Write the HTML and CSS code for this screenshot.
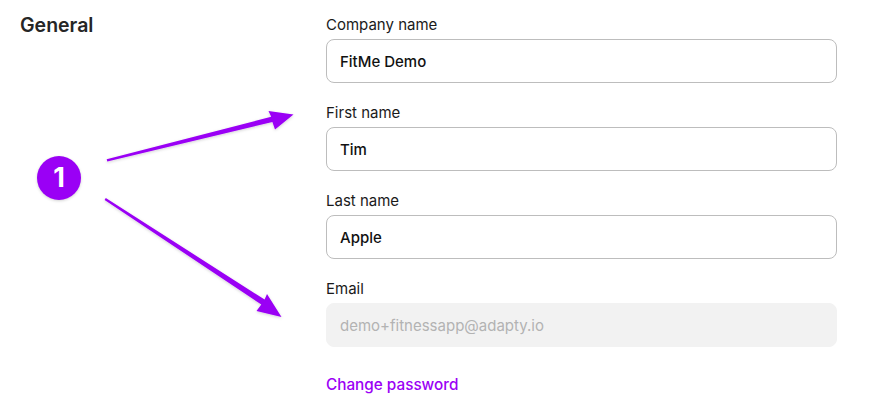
FILE: index.html
```html
<!DOCTYPE html>
<html lang="en">
<head>
<meta charset="utf-8">
<link rel="stylesheet" href="styles.css">
</head>
<body>
<div class="page">
  <div class="side">
    <h2 class="title">General</h2>
  </div>
  <form class="form">
    <div class="field">
      <label class="label">Company name</label>
      <div class="input">FitMe Demo</div>
    </div>
    <div class="field">
      <label class="label">First name</label>
      <div class="input">Tim</div>
    </div>
    <div class="field">
      <label class="label">Last name</label>
      <div class="input">Apple</div>
    </div>
    <div class="field">
      <label class="label">Email</label>
      <div class="input disabled">demo+fitnessapp@adapty.io</div>
    </div>
    <a class="link" href="#">Change password</a>
  </form>
</div>
<div class="badge">1</div>
<svg class="arrows" width="884" height="409" viewBox="0 0 884 409">
  <defs>
    <filter id="sh" x="-20%" y="-20%" width="140%" height="140%">
      <feDropShadow dx="0" dy="1" stdDeviation="1.5" flood-color="#000" flood-opacity="0.18"/>
    </filter>
  </defs>
  <g fill="#9a00f5" filter="url(#sh)">
    <polygon points="106.7,159.2 271.2,116.8 268.5,111 293.5,114.5 275,129.5 272.4,122 107.3,161.6"/>
    <polygon points="105.8,198 264.6,299.6 267,294 281.5,317 256.5,311 261.3,304.5 104.6,200"/>
  </g>
</svg>
</body>
</html>
```
FILE: styles.css
```css
html, body {
  margin: 0;
  padding: 0;
  background: #ffffff;
}
body {
  font-family: Inter, "Noto Sans", sans-serif;
  color: #1f1f1f;
  width: 884px;
  height: 409px;
  overflow: hidden;
  position: relative;
}
.page {
  display: flex;
  padding: 15px 0 0 20px;
}
.side {
  width: 306px;
}
.title {
  margin: -1px 0 0 0;
  font-size: 19.5px;
  line-height: 22px;
  font-weight: 600;
  color: #262626;
}
.form {
  width: 511px;
  display: flex;
  flex-direction: column;
}
.field {
  display: flex;
  flex-direction: column;
  gap: 4px;
  margin-bottom: 20px;
}
.label {
  font-size: 15px;
  line-height: 20px;
  color: #1a1a1a;
}
.input {
  box-sizing: border-box;
  height: 44px;
  border: 1px solid #bdbdbd;
  border-radius: 8px;
  padding: 0 13px;
  display: flex;
  align-items: center;
  font-size: 15px;
  font-weight: 450;
  color: #111111;
}
.input.disabled {
  border-color: #f2f2f2;
  background: #f2f2f2;
  color: #b3b3b3;
  font-weight: 400;
}
.link {
  margin-top: 8px;
  font-size: 15.3px;
  line-height: 20px;
  font-weight: 500;
  color: #9b00f5;
  text-decoration: none;
}
.badge {
  position: absolute;
  left: 37px;
  top: 156px;
  width: 44px;
  height: 44px;
  border-radius: 50%;
  background: #9a00f5;
  color: #fff;
  font-weight: 700;
  font-size: 27px;
  line-height: 44px;
  text-align: center;
  box-shadow: 0 1px 3px rgba(0,0,0,0.18);
}
.arrows {
  position: absolute;
  left: 0;
  top: 0;
  pointer-events: none;
}
```
